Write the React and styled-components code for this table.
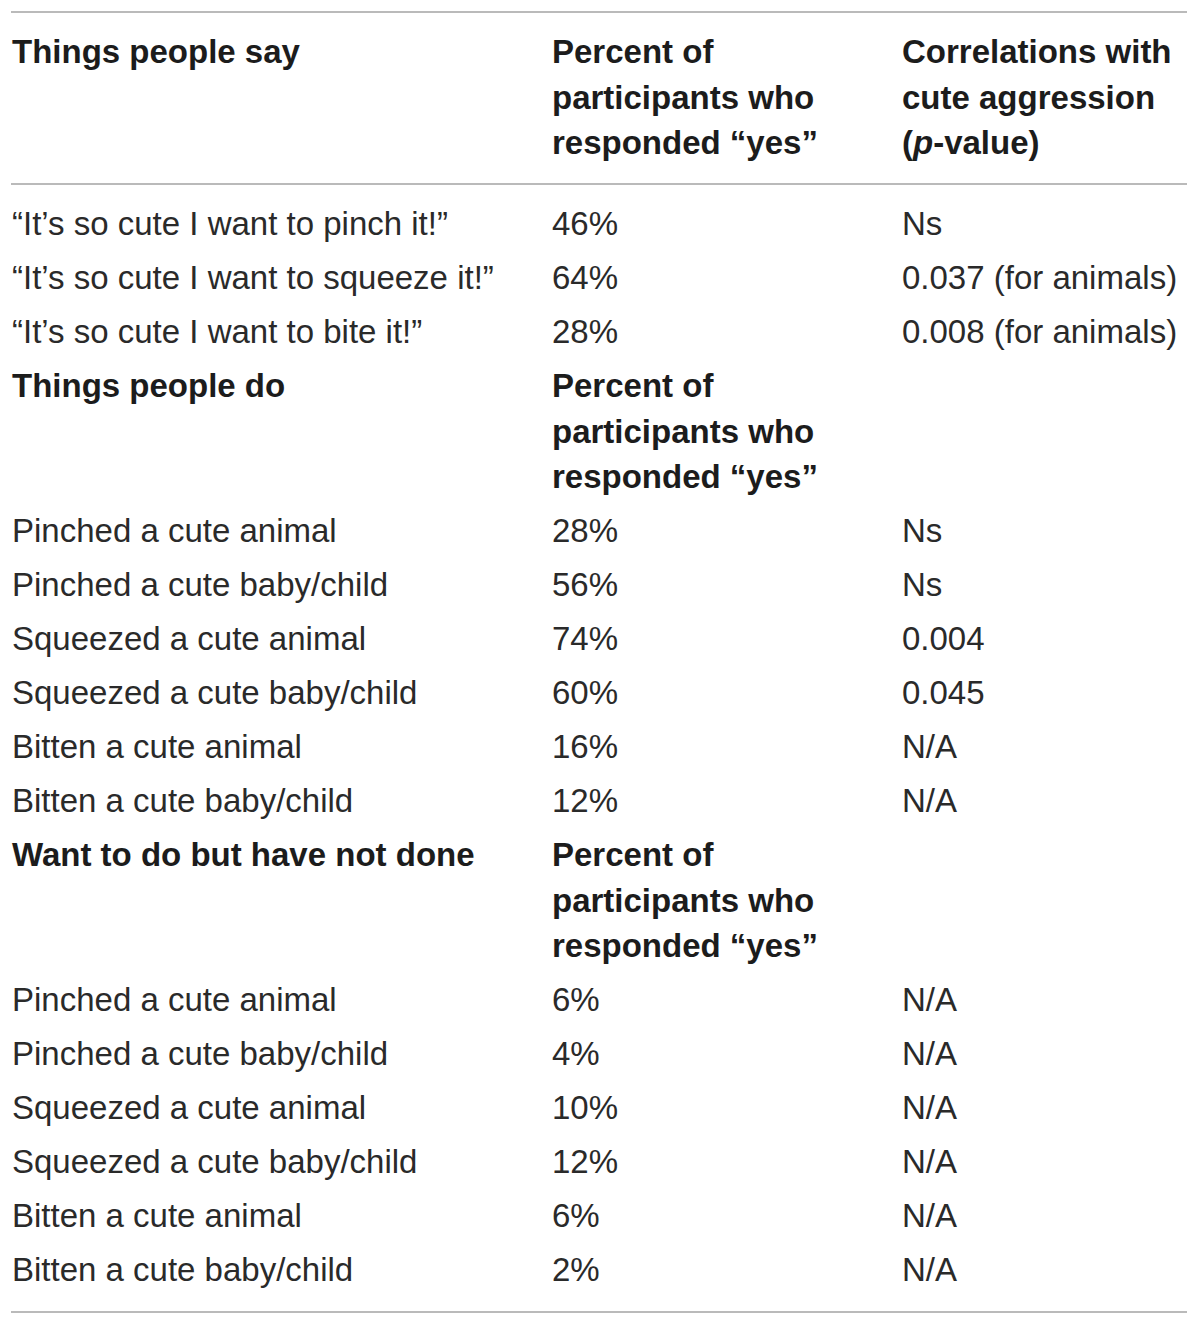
import React from "react"
import styled, { createGlobalStyle } from "styled-components"

const GlobalStyle = createGlobalStyle`
  html, body {
    margin: 0;
    padding: 0;
    background: #fff;
  }
  body {
    font-family: "Liberation Sans", Arial, sans-serif;
    color: #222;
  }
`

const sections = [
    {
        title: "Things people say",
        percent: ["Percent of", "participants who", "responded “yes”"],
        rows: [
            ["“It’s so cute I want to pinch it!”", "46%", "Ns"],
            ["“It’s so cute I want to squeeze it!”", "64%", "0.037 (for animals)"],
            ["“It’s so cute I want to bite it!”", "28%", "0.008 (for animals)"],
        ],
    },
    {
        title: "Things people do",
        percent: ["Percent of", "participants who", "responded “yes”"],
        rows: [
            ["Pinched a cute animal", "28%", "Ns"],
            ["Pinched a cute baby/child", "56%", "Ns"],
            ["Squeezed a cute animal", "74%", "0.004"],
            ["Squeezed a cute baby/child", "60%", "0.045"],
            ["Bitten a cute animal", "16%", "N/A"],
            ["Bitten a cute baby/child", "12%", "N/A"],
        ],
    },
    {
        title: "Want to do but have not done",
        percent: ["Percent of", "participants who", "responded “yes”"],
        rows: [
            ["Pinched a cute animal", "6%", "N/A"],
            ["Pinched a cute baby/child", "4%", "N/A"],
            ["Squeezed a cute animal", "10%", "N/A"],
            ["Squeezed a cute baby/child", "12%", "N/A"],
            ["Bitten a cute animal", "6%", "N/A"],
            ["Bitten a cute baby/child", "2%", "N/A"],
        ],
    },
]

function App() {
    const [first, ...rest] = sections
    return (
        <>
            <GlobalStyle />
            <Page>
                <Table>
                    <Head>
                        <Row>
                            <Cell bold>{first.title}</Cell>
                            <Cell bold>{first.percent.map(l => <Line key={l}>{l}</Line>)}</Cell>
                            <Cell bold>
                                <Line>Correlations with</Line>
                                <Line>cute aggression</Line>
                                <Line>(<i>p</i>-value)</Line>
                            </Cell>
                        </Row>
                    </Head>
                    <Body>
                        {first.rows.map((r, i) => (
                            <Row key={"a" + i}>
                                {r.map((c, j) => <Cell key={j}>{c}</Cell>)}
                            </Row>
                        ))}
                        {rest.map(s => (
                            <React.Fragment key={s.title}>
                                <Row>
                                    <Cell bold>{s.title}</Cell>
                                    <Cell bold>{s.percent.map(l => <Line key={l}>{l}</Line>)}</Cell>
                                    <Cell />
                                </Row>
                                {s.rows.map((r, i) => (
                                    <Row key={s.title + i}>
                                        {r.map((c, j) => <Cell key={j}>{c}</Cell>)}
                                    </Row>
                                ))}
                            </React.Fragment>
                        ))}
                    </Body>
                </Table>
            </Page>
        </>
    )
}

export default App

const Page = styled.div`
    width: 1200px;
    height: 1325px;
    padding: 11px 13px 0 11px;
    box-sizing: border-box;
`

const Table = styled.div`
    border-top: 2px solid #bababa;
    border-bottom: 2px solid #bababa;
`

const Head = styled.div`
    padding: 12px 0 13px;
    border-bottom: 2px solid #bababa;
`

const Body = styled.div`
    padding: 12px 0 14px;
`

const Row = styled.div`
    display: grid;
    grid-template-columns: 540px 350px 1fr;
    padding: 4.25px 0 4.25px 1px;
`

const Cell = styled.div`
    font-size: 33px;
    line-height: 45.5px;
    font-weight: ${props => props.bold ? 700 : 400};
    color: ${props => props.bold ? "#1c1c1c" : "#2a2a2a"};
    white-space: nowrap;

    i {
        font-style: italic;
    }
`

const Line = styled.div`
    display: block;
`
